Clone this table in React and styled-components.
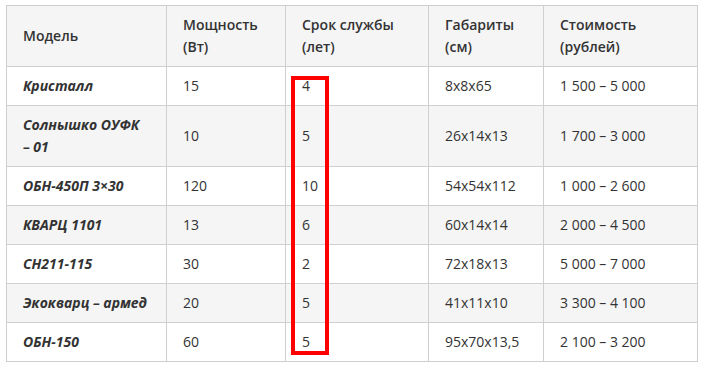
import React from "react";
import styled, { createGlobalStyle } from "styled-components";

const Global = createGlobalStyle`
  html, body { margin: 0; padding: 0; background: #fff; }
  body { font-family: "Open Sans", "Noto Sans", sans-serif; color: #333; }
`;

const Page = styled.div`
  padding: 5px 6px;
`;

const Wrap = styled.div`
  position: relative;
  width: 691px;
`;

const Table = styled.table`
  width: 691px;
  border-collapse: collapse;
  table-layout: fixed;
  border: 1px solid #cfcfcf;
  font-size: 14px;
  line-height: 22px;
`;

const Row = styled.tr`
  background: ${(p) => (p.$shade ? "#f5f5f5" : "#fff")};
`;

const Th = styled.th`
  text-align: left;
  font-weight: 600;
  padding: 8px 16px 8px 16px;
  border: 1px solid #cfcfcf;
  color: #333;
  vertical-align: middle;
  height: 44px;
`;

const Td = styled.td`
  padding: 8px 16px;
  border: 1px solid #cfcfcf;
  vertical-align: middle;
  color: #333;
  font-weight: ${(p) => (p.$model ? 700 : 400)};
  font-style: ${(p) => (p.$model ? "italic" : "normal")};
  height: 22px;
`;

const Keep = styled.span`
  white-space: nowrap;
`;

const Highlight = styled.div`
  position: absolute;
  left: 285px;
  top: 71px;
  width: 30px;
  height: 271px;
  border: 4px solid #ff0000;
  pointer-events: none;
`;

const cols = [160, 119, 143, 115, 154];

const headers = ["Модель", "Мощность (Вт)", "Срок службы (лет)", "Габариты (см)", "Стоимость (рублей)"];

const rows = [
  ["Кристалл", "15", "4", "8x8x65", "1 500 – 5 000"],
  [
    <>
      Солнышко ОУФК <Keep>– 01</Keep>
    </>,
    "10",
    "5",
    "26x14x13",
    "1 700 – 3 000",
  ],
  ["ОБН-450П 3×30", "120", "10", "54x54x112", "1 000 – 2 600"],
  ["КВАРЦ 1101", "13", "6", "60x14x14", "2 000 – 4 500"],
  ["СН211-115", "30", "2", "72x18x13", "5 000 – 7 000"],
  ["Экокварц – армед", "20", "5", "41x11x10", "3 300 – 4 100"],
  ["ОБН-150", "60", "5", "95x70x13,5", "2 100 – 3 200"],
];

export default function App() {
  return (
    <Page>
      <Global />
      <Wrap>
        <Table>
          <colgroup>
            {cols.map((w, i) => (
              <col key={i} style={{ width: w }} />
            ))}
          </colgroup>
          <thead>
            <Row $shade>
              {headers.map((h) => (
                <Th key={h}>{h}</Th>
              ))}
            </Row>
          </thead>
          <tbody>
            {rows.map((r, i) => (
              <Row key={i} $shade={i % 2 === 1}>
                {r.map((c, j) => (
                  <Td key={j} $model={j === 0}>
                    {c}
                  </Td>
                ))}
              </Row>
            ))}
          </tbody>
        </Table>
        <Highlight />
      </Wrap>
    </Page>
  );
}
